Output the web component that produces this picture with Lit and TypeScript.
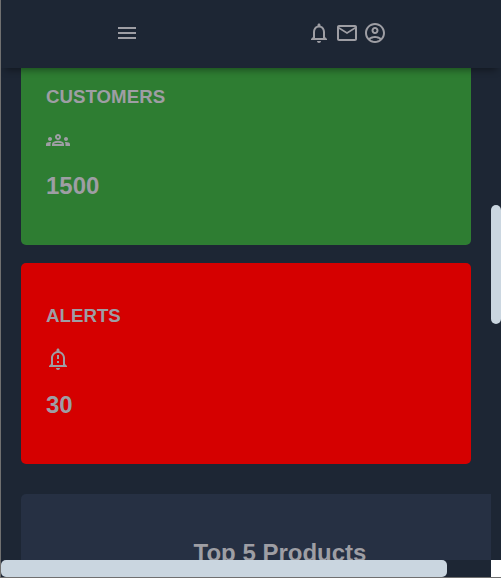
import { LitElement, html, css, svg } from "lit";
import { customElement, property } from "lit/decorators.js";
import { classMap } from "lit/directives/class-map.js";
import { styleMap } from "lit/directives/style-map.js";

const ICONS: Record<string, string> = {
  menu: "M3 18h18v-2H3v2zm0-5h18v-2H3v2zm0-7v2h18V6H3z",
  bell: "M12 22c1.1 0 2-.9 2-2h-4c0 1.1.9 2 2 2zm6-6v-5c0-3.07-1.63-5.64-4.5-6.32V4c0-.83-.67-1.5-1.5-1.5s-1.5.67-1.5 1.5v.68C7.64 5.36 6 7.92 6 11v5l-2 2v1h16v-1l-2-2zm-2 1H8v-6c0-2.48 1.51-4.5 4-4.5s4 2.02 4 4.5v6z",
  mail: "M22 6c0-1.1-.9-2-2-2H4c-1.1 0-2 .9-2 2v12c0 1.1.9 2 2 2h16c1.1 0 2-.9 2-2V6zm-2 0l-8 5-8-5h16zm0 12H4V8l8 5 8-5v10z",
  account: "M12 2C6.48 2 2 6.48 2 12s4.48 10 10 10 10-4.48 10-10S17.52 2 12 2zM7.35 18.5C8.66 17.56 10.26 17 12 17s3.34.56 4.65 1.5C15.34 19.44 13.74 20 12 20s-3.34-.56-4.65-1.5zm10.79-1.38C16.45 15.8 14.32 15 12 15s-4.45.8-6.14 2.12C4.7 15.73 4 13.95 4 12c0-4.42 3.58-8 8-8s8 3.58 8 8c0 1.95-.7 3.73-1.86 5.12zM12 6c-1.93 0-3.5 1.57-3.5 3.5S10.07 13 12 13s3.5-1.57 3.5-3.5S13.93 6 12 6zm0 5c-.83 0-1.5-.67-1.5-1.5S11.17 8 12 8s1.5.67 1.5 1.5S12.83 11 12 11z",
  groups: "M4 13c1.1 0 2-.9 2-2s-.9-2-2-2-2 .9-2 2 .9 2 2 2zm1.13 1.1C4.76 14.04 4.39 14 4 14c-.99 0-1.93.21-2.78.58C.48 14.9 0 15.62 0 16.43V18h4.5v-1.61c0-.83.23-1.61.63-2.29zM20 13c1.1 0 2-.9 2-2s-.9-2-2-2-2 .9-2 2 .9 2 2 2zm4 3.43c0-.81-.48-1.53-1.22-1.85C21.93 14.21 20.99 14 20 14c-.39 0-.76.04-1.13.1.4.68.63 1.46.63 2.29V18H24v-1.57zM16.24 13.65C15.07 13.13 13.63 12.75 12 12.75c-1.63 0-3.07.39-4.24.9C6.68 14.13 6 15.21 6 16.39V18h12v-1.61c0-1.18-.68-2.26-1.76-2.74zM8.07 16c.09-.23.13-.39.91-.69.97-.38 1.99-.56 3.02-.56s2.05.18 3.02.56c.77.3.81.46.91.69H8.07zM12 8c.55 0 1 .45 1 1s-.45 1-1 1-1-.45-1-1 .45-1 1-1m0-2c-1.66 0-3 1.34-3 3s1.34 3 3 3 3-1.34 3-3-1.34-3-3-3z",
  alert: "M10.01 21.01c0 1.1.89 1.99 1.99 1.99s1.99-.89 1.99-1.99h-3.98zM12 6c2.76 0 5 2.24 5 5v7H7v-7c0-2.76 2.24-5 5-5zm0-4.5c-.83 0-1.5.67-1.5 1.5v1.17C7.36 4.85 5 7.65 5 11v6l-2 2v1h18v-1l-2-2v-6c0-3.35-2.36-6.15-5.5-6.83V3c0-.83-.67-1.5-1.5-1.5zM11 8h2v4h-2V8zm0 6h2v2h-2v-2z",
};

@customElement("md-icon")
class MdIcon extends LitElement {
  @property() name = "";

  static styles = css`
    :host {
      display: block;
      width: 24px;
      height: 24px;
    }
    .glyph {
      display: block;
      fill: currentColor;
    }
  `;

  render() {
    return html`<svg class="glyph" width="24" height="24" viewBox="0 0 24 24" aria-hidden="true">
      ${svg`<path d=${ICONS[this.name]}></path>`}
    </svg>`;
  }
}

@customElement("stat-card")
class StatCard extends LitElement {
  @property() label = "";
  @property() icon = "";
  @property() value = "";
  @property() tone = "green";

  static styles = css`
    :host {
      display: block;
    }
    .card {
      display: flex;
      flex-direction: column;
      align-items: flex-start;
      gap: 20px;
      padding: 42px 25px 45px;
      border-radius: 5px;
    }
    .green {
      background: #2e7d32;
    }
    .red {
      background: #d50000;
    }
    .label,
    .value {
      margin: 0;
    }
    .label {
      line-height: 22px;
    }
    .value {
      font-size: 24px;
      line-height: 28px;
    }
  `;

  render() {
    return html`<article class=${classMap({ card: true, [this.tone]: true })}>
      <h3 class="label">${this.label}</h3>
      <md-icon name=${this.icon}></md-icon>
      <h1 class="value">${this.value}</h1>
    </article>`;
  }
}

@customElement("app-root")
class AppRoot extends LitElement {
  private cards = [
    { label: "CUSTOMERS", icon: "groups", value: "1500", tone: "green" },
    { label: "ALERTS", icon: "alert", value: "30", tone: "red" },
  ];

  private actions = [
    { icon: "bell", label: "Notifications" },
    { icon: "mail", label: "Messages" },
    { icon: "account", label: "Account" },
  ];

  // Visible share and offset of the scrolled area, in percent.
  private vertical = { start: 36.6, size: 21.3 };
  private horizontal = { start: 0, size: 91 };

  static styles = css`
    :host {
      display: block;
      font-family: "Liberation Sans", Arial, sans-serif;
      font-size: 16px;
      color: #9e9ea4;
    }
    .frame {
      position: relative;
      box-sizing: border-box;
      display: flex;
      flex-direction: column;
      height: 100vh;
      overflow: hidden;
      background: #1d2634;
      border-left: 1px solid #707070;
      border-bottom: 1px solid #707070;
    }
    .header {
      position: relative;
      z-index: 1;
      flex: none;
      box-sizing: border-box;
      height: 68px;
      padding: 0 30px 2px;
      display: flex;
      align-items: center;
      justify-content: space-around;
      background: #1d2634;
      box-shadow: 0 6px 7px -4px rgba(0, 0, 0, 0.4);
    }
    .actions {
      display: flex;
      gap: 4px;
    }
    .icon-button {
      display: block;
      padding: 0;
      border: 0;
      background: none;
      color: inherit;
      cursor: pointer;
    }
    .main {
      flex: 1;
      min-height: 0;
      overflow: hidden;
      margin-right: 10px;
      padding: 0 20px;
    }
    /* The page is scrolled so that the first card starts behind the header. */
    .cards {
      display: grid;
      gap: 18px;
      margin-top: -24px;
    }
    .chart {
      box-sizing: border-box;
      width: calc(100% + 68px);
      height: 400px;
      margin-top: 30px;
      padding: 45px 25px;
      border-radius: 5px;
      background: #263043;
    }
    .chart-title {
      margin: 0;
      font-size: 24px;
      line-height: 28px;
      text-align: center;
    }
    .bottom {
      position: relative;
      z-index: 1;
      flex: none;
      display: grid;
      grid-template-columns: 1fr 10px;
      height: 17px;
      background: #1d2634;
    }
    .corner {
      background: #fff;
    }
    .rail {
      position: absolute;
      top: 0;
      right: 0;
      bottom: 17px;
      width: 10px;
      z-index: 2;
    }
    .thumb {
      position: relative;
      border-radius: 5px;
      background: #cad6e0;
    }
    .across {
      height: 100%;
    }
  `;

  render() {
    return html`<div class="frame">
      <header class="header">
        <button class="icon-button" aria-label="Menu"><md-icon name="menu"></md-icon></button>
        <div class="actions">
          ${this.actions.map(
            (a) => html`<button class="icon-button" aria-label=${a.label}>
              <md-icon name=${a.icon}></md-icon>
            </button>`
          )}
        </div>
      </header>
      <main class="main">
        <div class="cards">
          ${this.cards.map(
            (c) => html`<stat-card
              label=${c.label}
              icon=${c.icon}
              value=${c.value}
              tone=${c.tone}
            ></stat-card>`
          )}
        </div>
        <section class="chart"><h2 class="chart-title">Top 5 Products</h2></section>
      </main>
      <div class="bottom">
        <div><div class="thumb across" style=${styleMap({ width: `${this.horizontal.size}%` })}></div></div>
        <div class="corner"></div>
      </div>
      <div class="rail">
        <div
          class="thumb"
          style=${styleMap({ top: `${this.vertical.start}%`, height: `${this.vertical.size}%` })}
        ></div>
      </div>
    </div>`;
  }
}
